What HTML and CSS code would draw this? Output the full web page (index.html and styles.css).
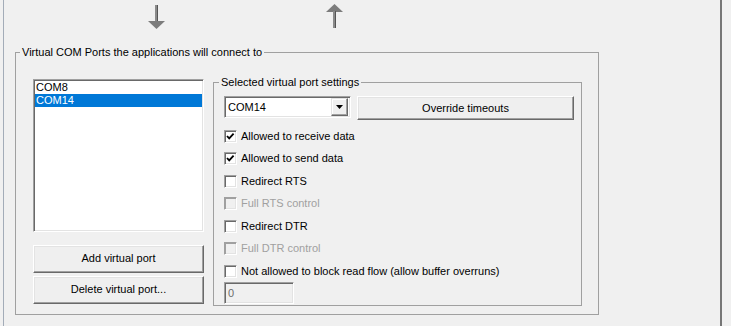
FILE: index.html
```html
<!DOCTYPE html>
<html>
<head>
<meta charset="utf-8">
<link rel="stylesheet" href="styles.css">
</head>
<body>
<div class="frame">
  <div class="arrows">
    <svg class="arrow down" width="17" height="24" viewBox="0 0 17 24">
      <rect x="7" y="0" width="2" height="17" fill="#8a8a8a"/>
      <rect x="9" y="0" width="1" height="17" fill="#555"/>
      <polygon points="0,16 17,16 8.5,24" fill="#7c7c7c"/>
    </svg>
    <svg class="arrow up" width="17" height="24" viewBox="0 0 17 24">
      <polygon points="8.5,0 0,8 17,8" fill="#7c7c7c"/>
      <rect x="7" y="7" width="2" height="17" fill="#8a8a8a"/>
      <rect x="9" y="7" width="1" height="17" fill="#555"/>
    </svg>
  </div>
  <fieldset class="group outer">
    <legend>Virtual COM Ports the applications will connect to</legend>
    <div class="outer-body">
      <div class="left-col">
        <ul class="listbox">
          <li>COM8</li>
          <li class="sel">COM14</li>
        </ul>
        <div class="btns">
          <button class="btn side">Add virtual port</button>
          <button class="btn side">Delete virtual port...</button>
        </div>
      </div>
      <fieldset class="group inner">
        <legend>Selected virtual port settings</legend>
        <div class="top-row">
          <div class="combo">
            <span class="combo-text">COM14</span>
            <span class="drop"><svg width="7" height="4" viewBox="0 0 7 4"><polygon points="0,0 7,0 3.5,4" fill="#000"/></svg></span>
          </div>
          <button class="btn override">Override timeouts</button>
        </div>
        <div class="checks">
          <div class="chk"><span class="box"><svg width="11" height="11" viewBox="0 0 11 11"><polyline points="2,5 4.2,7.4 8.6,2.6" fill="none" stroke="#000" stroke-width="1.8"/></svg></span>Allowed to receive data</div>
          <div class="chk"><span class="box"><svg width="11" height="11" viewBox="0 0 11 11"><polyline points="2,5 4.2,7.4 8.6,2.6" fill="none" stroke="#000" stroke-width="1.8"/></svg></span>Allowed to send data</div>
          <div class="chk"><span class="box"></span>Redirect RTS</div>
          <div class="chk disabled"><span class="box"></span>Full RTS control</div>
          <div class="chk"><span class="box"></span>Redirect DTR</div>
          <div class="chk disabled"><span class="box"></span>Full DTR control</div>
          <div class="chk"><span class="box"></span>Not allowed to block read flow (allow buffer overruns)</div>
        </div>
        <div class="edit">0</div>
      </fieldset>
    </div>
  </fieldset>
</div>
</body>
</html>
```
FILE: styles.css
```css
* { box-sizing: border-box; }
html, body { margin: 0; padding: 0; background: #f0f0f0; }
body {
  width: 731px;
  height: 326px;
  overflow: hidden;
  font-family: "Liberation Sans", Arial, sans-serif;
  font-size: 11px;
  line-height: 13px;
  color: #000;
}
.frame {
  margin-left: 3px;
  width: 719px;
  height: 326px;
  border-left: 1px solid #a3acb8;
  border-right: 2px solid #767676;
}
.arrows {
  display: flex;
  align-items: flex-start;
  height: 46px;
  padding-left: 144px;
  gap: 161px;
}
.arrow { display: block; }
.arrow.down { margin-top: 5px; }
.arrow.up { margin-top: 4px; }

.group {
  margin: 0;
  padding: 0;
  min-width: 0;
  border: 1px solid #a0a0a0;
}
.group legend {
  padding: 0 2px;
  margin-left: 4px;
  line-height: 13px;
}
.outer { margin-left: 11px; width: 584px; }
.outer-body {
  display: flex;
  padding: 17px 16px 8px 17px;
}
.left-col {
  width: 171px;
  display: flex;
  flex-direction: column;
  margin-top: 3px;
  margin-bottom: 2px;
}
.listbox {
  list-style: none;
  margin: 0;
  padding: 1px;
  height: 153px;
  background: #fff;
  border: 1px solid;
  border-color: #a0a0a0 #fff #fff #a0a0a0;
  box-shadow: inset 1px 1px 0 #696969, inset -1px -1px 0 #e3e3e3;
}
.listbox li { height: 13px; line-height: 13px; padding-left: 1px; }
.listbox li.sel { background: #0078d7; color: #fff; }
.btns {
  margin-top: auto;
  display: flex;
  flex-direction: column;
  gap: 3px;
}
.btn {
  font: inherit;
  color: #000;
  padding: 0;
  background: #efefef;
  border: 1px solid;
  border-color: #fff #696969 #696969 #fff;
  box-shadow: inset -1px -1px 0 #a0a0a0, inset 1px 1px 0 #e3e3e3;
  display: flex;
  align-items: center;
  justify-content: center;
}
.btn.side { height: 28px; width: 100%; }

.inner {
  margin-left: 9px;
  width: 369px;
  padding: 7px 7px 1px 10px;
}
.inner legend { margin-left: -5px; }
.top-row {
  display: flex;
  align-items: flex-start;
  gap: 6px;
}
.combo {
  width: 127px;
  height: 22px;
  display: flex;
  align-items: center;
  background: #fff;
  border: 1px solid;
  border-color: #a0a0a0 #fff #fff #a0a0a0;
  box-shadow: inset 1px 1px 0 #696969, inset -1px -1px 0 #e3e3e3;
  padding: 2px;
}
.combo-text { flex: 1; padding-left: 1px; }
.drop {
  width: 17px;
  height: 18px;
  display: flex;
  align-items: center;
  justify-content: center;
  background: #efefef;
  border: 1px solid;
  border-color: #e3e3e3 #696969 #696969 #e3e3e3;
  box-shadow: inset -1px -1px 0 #a0a0a0, inset 1px 1px 0 #fff;
}
.drop svg { display: block; }
.btn.override { width: 217px; height: 24px; }

.checks { margin-top: 5px; }
.chk {
  height: 22.5px;
  display: flex;
  align-items: center;
  gap: 4px;
}
.box {
  width: 13px;
  height: 13px;
  flex: none;
  background: #fff;
  border: 1px solid;
  border-color: #a0a0a0 #fff #fff #a0a0a0;
  box-shadow: inset 1px 1px 0 #696969, inset -1px -1px 0 #e3e3e3;
}
.box svg { display: block; }
.chk.disabled { color: #a0a0a0; }
.chk.disabled .box {
  background: #f0f0f0;
  box-shadow: inset 1px 1px 0 #a0a0a0, inset -1px -1px 0 #e3e3e3;
}
.edit {
  width: 70px;
  height: 22px;
  margin-top: -1px;
  background: #f0f0f0;
  color: #6d6d6d;
  border: 1px solid;
  border-color: #a0a0a0 #fff #fff #a0a0a0;
  box-shadow: inset 1px 1px 0 #696969, inset -1px -1px 0 #e3e3e3;
  padding: 4px 3px;
}
```
